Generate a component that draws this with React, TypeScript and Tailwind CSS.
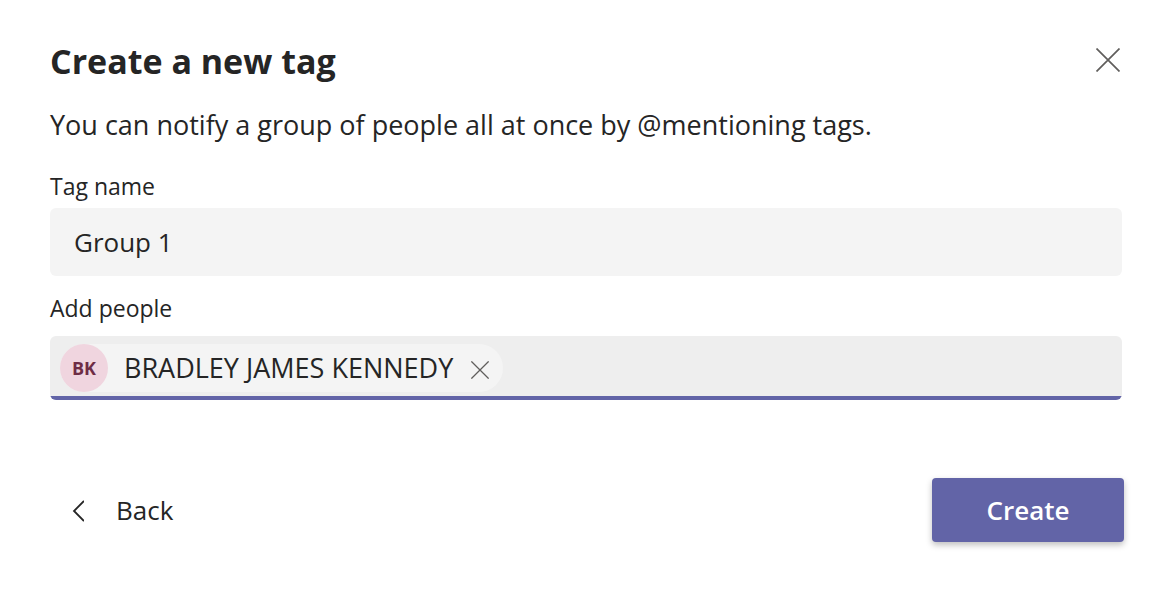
import React, { useState } from 'react';

const CloseIcon = ({ className }: { className: string }) => (
  <svg viewBox="0 0 24 24" className={className} fill="none" stroke="currentColor" aria-hidden="true">
    <path d="M.5.5 23.5 23.5M23.5.5.5 23.5" strokeWidth="1.7" />
  </svg>
);

export default function App() {
  const [name, setName] = useState('Group 1');
  const [people, setPeople] = useState([{ initials: 'BK', name: 'BRADLEY JAMES KENNEDY' }]);

  return (
    <main className="bg-white pt-10 pr-11 pb-14 pl-[50px] font-['Open_Sans','Noto_Sans',sans-serif] text-[#252525]">
      <header className="flex items-start justify-between pr-1">
        <h1 className="text-[34px] leading-[42px] font-bold">Create a new tag</h1>
        <button type="button" aria-label="Close" className="mt-2 text-[#605e5c]">
          <CloseIcon className="size-6" />
        </button>
      </header>
      <p className="mt-[22px] text-[27px] leading-[42px]">You can notify a group of people all at once by @mentioning tags.</p>
      <form onSubmit={(e) => e.preventDefault()}>
        <div className="pr-0.5">
          <label htmlFor="tag-name" className="mt-6 block text-[23px] leading-8">Tag name</label>
          <input
            id="tag-name"
            value={name}
            onChange={(e) => setName(e.target.value)}
            className="mt-1.5 block h-[68px] w-full rounded-md bg-[#f4f4f4] px-6 text-[26px] outline-none"
          />
          <label htmlFor="people" className="mt-4 block text-[23px] leading-8">Add people</label>
          <div className="mt-3 flex h-16 flex-col overflow-hidden rounded-md bg-[#eee]">
            <div className="flex flex-1 items-center pt-1 pl-2.5">
              {people.map((p) => (
                <span key={p.name} className="flex h-12 items-center rounded-full bg-[#f4f4f4] pr-3.5">
                  <span className="flex size-12 items-center justify-center rounded-full bg-[#f0d5df] text-lg font-bold text-[#6e2c45]">{p.initials}</span>
                  <span className="ml-4 text-[27px]">{p.name}</span>
                  <button type="button" aria-label={`Remove ${p.name}`} className="mt-1 ml-[18px] text-[#605e5c]" onClick={() => setPeople([])}>
                    <CloseIcon className="size-[18px]" />
                  </button>
                </span>
              ))}
              <input id="people" className="h-12 min-w-0 flex-1 bg-transparent px-4 text-[27px] outline-none" />
            </div>
            <div className="h-1 bg-[#6264a7]" />
          </div>
        </div>
        <div className="mt-[78px] flex items-center justify-between">
          <button type="button" className="flex items-center gap-8 pl-5 text-[26px]">
            <svg viewBox="0 0 14 22" className="mt-0.5 h-[22px] w-[14px]" fill="none" stroke="currentColor" strokeWidth="1.8" aria-hidden="true">
              <path d="M14 1 4 11 14 21" />
            </svg>
            Back
          </button>
          <button type="submit" className="h-16 w-48 rounded bg-[#6264a7] text-[26px] font-semibold text-white shadow-[0_3px_6px_rgba(0,0,0,0.25)]">Create</button>
        </div>
      </form>
    </main>
  );
}
